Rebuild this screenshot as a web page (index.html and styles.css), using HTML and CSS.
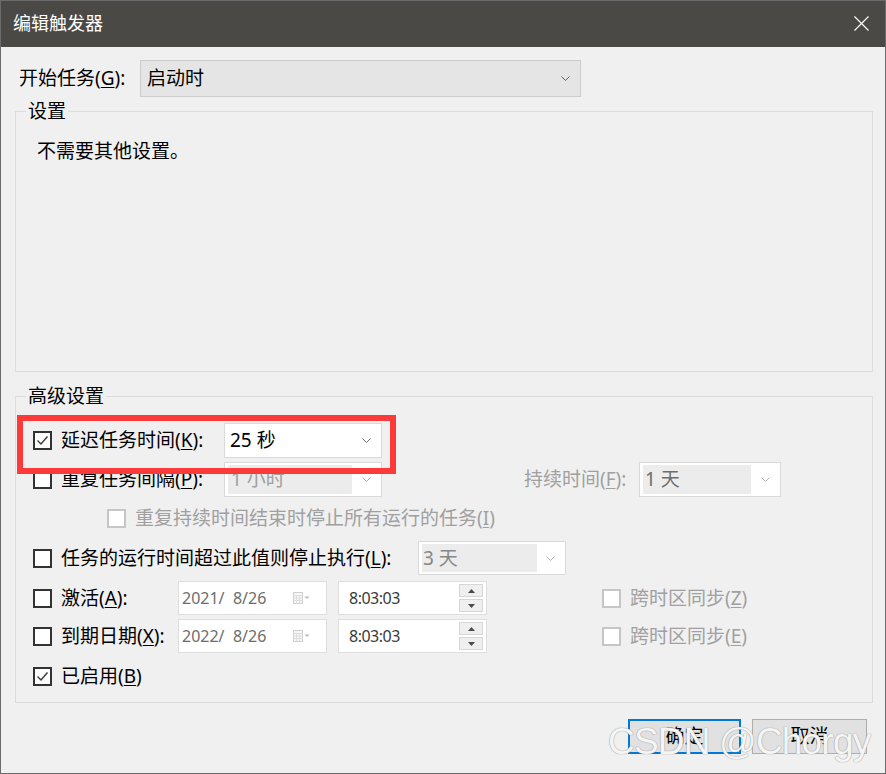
FILE: index.html
```html
<!DOCTYPE html>
<html lang="zh-CN">
<head>
<meta charset="utf-8">
<title>编辑触发器</title>
<link rel="stylesheet" href="styles.css">
</head>
<body>
<div class="win">
  <div class="titlebar">
    <span class="title">编辑触发器</span>
    <svg class="close" width="15" height="15" viewBox="0 0 15 15"><path d="M0.5 0.5L14.5 14.5M14.5 0.5L0.5 14.5" stroke="#ffffff" stroke-width="1.2" fill="none"/></svg>
  </div>
  <div class="content">
    <div class="row-start">
      <span class="start-label">开始任务(<u>G</u>):</span>
      <div class="combo combo-gray c-start">
        <span class="val">启动时</span>
        <svg class="chev" width="9" height="5" viewBox="0 0 9 5"><path d="M0.5 0.5L4.5 4.5L8.5 0.5" stroke="#5f5f5f" fill="none"/></svg>
      </div>
    </div>

    <div class="group group-settings">
      <span class="legend">设置</span>
      <p class="note">不需要其他设置。</p>
    </div>

    <div class="group group-adv">
      <span class="legend">高级设置</span>
      <div class="highlight"></div>

      <div class="arow r1">
        <span class="cb"><svg width="15" height="15" viewBox="0 0 15 15"><path d="M2.5 7.5L6 11L12.5 3.5" stroke="#3a3a3a" stroke-width="1.4" fill="none"/></svg></span>
        <span class="lbl w-delay">延迟任务时间(<u>K</u>):</span>
        <div class="combo c-delay">
          <span class="val">25 秒</span>
          <svg class="chev" width="9" height="5" viewBox="0 0 9 5"><path d="M0.5 0.5L4.5 4.5L8.5 0.5" stroke="#6a6a6a" fill="none"/></svg>
        </div>
      </div>

      <div class="arow r2">
        <span class="cb"></span>
        <span class="lbl w-delay">重复任务间隔(<u>P</u>):</span>
        <div class="combo dis c-delay">
          <span class="field f-rep">1 小时</span>
          <svg class="chev" width="9" height="5" viewBox="0 0 9 5"><path d="M0.5 0.5L4.5 4.5L8.5 0.5" stroke="#b4b4b4" fill="none"/></svg>
        </div>
        <span class="lbl dim dur-lbl">持续时间(<u>F</u>):</span>
        <div class="combo dis c-dur">
          <span class="field f-dur">1 天</span>
          <svg class="chev" width="9" height="5" viewBox="0 0 9 5"><path d="M0.5 0.5L4.5 4.5L8.5 0.5" stroke="#b4b4b4" fill="none"/></svg>
        </div>
      </div>

      <div class="arow r3">
        <span class="cb dis indent"></span>
        <span class="lbl dim">重复持续时间结束时停止所有运行的任务(<u>I</u>)</span>
      </div>

      <div class="arow r4">
        <span class="cb"></span>
        <span class="lbl w-stop">任务的运行时间超过此值则停止执行(<u>L</u>):</span>
        <div class="combo dis c-stop">
          <span class="field f-stop">3 天</span>
          <svg class="chev" width="9" height="5" viewBox="0 0 9 5"><path d="M0.5 0.5L4.5 4.5L8.5 0.5" stroke="#b4b4b4" fill="none"/></svg>
        </div>
      </div>

      <div class="arow r5">
        <span class="cb"></span>
        <span class="lbl w-date">激活(<u>A</u>):</span>
        <div class="datebox">
          <span class="dval">2021/  8/26</span>
          <svg class="cal" width="17" height="12" viewBox="0 0 17 12"><rect x="0.5" y="0.5" width="9" height="11" fill="#f6f6f6" stroke="#cfcfcf"/><path d="M0.5 3.5H9.5M0.5 6H9.5M0.5 8.5H9.5M3.5 3.5V11.5M6.5 3.5V11.5" stroke="#dedede"/><path d="M11.5 4.5H16.5L14 7Z" fill="#b8b8b8"/></svg>
        </div>
        <div class="timebox">
          <span class="tval">8:03:03</span>
          <span class="spin">
            <span class="sb"><svg width="7" height="4" viewBox="0 0 7 4"><path d="M0 4L3.5 0L7 4Z" fill="#4a4a4a"/></svg></span>
            <span class="sb"><svg width="7" height="4" viewBox="0 0 7 4"><path d="M0 0L3.5 4L7 0Z" fill="#4a4a4a"/></svg></span>
          </span>
        </div>
        <span class="cb dis sync"></span>
        <span class="lbl dim">跨时区同步(<u>Z</u>)</span>
      </div>

      <div class="arow r6">
        <span class="cb"></span>
        <span class="lbl w-date">到期日期(<u>X</u>):</span>
        <div class="datebox">
          <span class="dval">2022/  8/26</span>
          <svg class="cal" width="17" height="12" viewBox="0 0 17 12"><rect x="0.5" y="0.5" width="9" height="11" fill="#f6f6f6" stroke="#cfcfcf"/><path d="M0.5 3.5H9.5M0.5 6H9.5M0.5 8.5H9.5M3.5 3.5V11.5M6.5 3.5V11.5" stroke="#dedede"/><path d="M11.5 4.5H16.5L14 7Z" fill="#b8b8b8"/></svg>
        </div>
        <div class="timebox">
          <span class="tval">8:03:03</span>
          <span class="spin">
            <span class="sb"><svg width="7" height="4" viewBox="0 0 7 4"><path d="M0 4L3.5 0L7 4Z" fill="#4a4a4a"/></svg></span>
            <span class="sb"><svg width="7" height="4" viewBox="0 0 7 4"><path d="M0 0L3.5 4L7 0Z" fill="#4a4a4a"/></svg></span>
          </span>
        </div>
        <span class="cb dis sync"></span>
        <span class="lbl dim">跨时区同步(<u>E</u>)</span>
      </div>

      <div class="arow r7">
        <span class="cb"><svg width="15" height="15" viewBox="0 0 15 15"><path d="M2.5 7.5L6 11L12.5 3.5" stroke="#3a3a3a" stroke-width="1.4" fill="none"/></svg></span>
        <span class="lbl">已启用(<u>B</u>)</span>
      </div>
    </div>

    <div class="buttons">
      <button class="btn btn-default">确定</button>
      <button class="btn">取消</button>
    </div>
  </div>
  <div class="watermark">CSDN @Chorgy</div>
</div>
</body>
</html>
```

FILE: styles.css
```css
* { box-sizing: border-box; }
html, body { margin: 0; padding: 0; }
body {
  background: #f0f0f0;
  font-family: "Noto Sans", "Noto Sans CJK SC", sans-serif;
  font-size: 19px;
  color: #000;
}
u { text-decoration-thickness: 1px; text-underline-offset: 2px; }

.win {
  position: relative;
  width: 886px;
  height: 774px;
  border: 1px solid #6b6b6b;
  background: #f0f0f0;
  overflow: hidden;
}

.titlebar {
  height: 46px;
  background: #4b4946;
  display: flex;
  align-items: center;
  justify-content: space-between;
  padding: 0 16px 3px 12px;
}
.title { color: #fff; font-size: 18px; line-height: 24px; }
.close { display: block; margin-top: 2px; }

.content { padding: 13px 12px 0 14px; }

.row-start { display: flex; align-items: center; height: 37px; }
.start-label { width: 121px; margin-left: 4px; line-height: 27px; }

.combo {
  display: flex;
  align-items: center;
  justify-content: space-between;
  background: #fff;
  border: 1px solid #d9d9d9;
  padding: 0 10px 0 5px;
  line-height: 27px;
}
.combo-gray { background: #e5e5e5; border-color: #cccccc; padding-left: 6px; }
.chev { display: block; flex: none; }
.c-start { width: 441px; height: 37px; }
.c-delay { width: 158px; height: 35px; }
.c-dur { width: 142px; height: 35px; }
.c-stop { width: 148px; height: 34px; }

.combo.dis { padding: 2px 10px 2px 3px; }
.field {
  align-self: stretch;
  display: flex;
  align-items: center;
  background: #ececec;
  padding-left: 3px;
  color: #a0a0a0;
}
.f-rep { width: 124px; }
.f-dur { width: 108px; color: #6d6d6d; padding-left: 2px; }
.f-stop { width: 115px; color: #878787; padding-left: 1px; }

.group {
  position: relative;
  border: 1px solid #dcdcdc;
}
.legend {
  position: absolute;
  top: -14px;
  left: 10px;
  padding: 0 2px;
  line-height: 27px;
  background: #f0f0f0;
}
.group-settings {
  margin-top: 14px;
  height: 261px;
  padding: 26px 0 0 21px;
}
.note { margin: 0; line-height: 27px; }

.group-adv {
  margin-top: 24px;
  padding: 26px 0 9px 17px;
}
.highlight {
  position: absolute;
  left: 1px;
  top: 18px;
  width: 379px;
  height: 59px;
  border: 6px solid #fd3a3a;
  z-index: 2;
}

.arow { display: flex; align-items: center; line-height: 27px; }
.r1 { height: 35px; }
.r2 { height: 35px; margin-top: 4px; }
.r3 { height: 36px; margin-top: 3px; }
.r4 { height: 34px; margin-top: 5px; }
.r5 { height: 34px; margin-top: 6px; }
.r6 { height: 34px; margin-top: 4px; }
.r7 { height: 34px; margin-top: 6px; }

.cb {
  flex: none;
  width: 19px;
  height: 19px;
  border: 2px solid #333;
  background: #fff;
  display: flex;
  align-items: center;
  justify-content: center;
}
.cb svg { display: block; }
.cb.dis { border-color: #c6c6c6; }
.cb.indent { margin-left: 74px; }
.cb.sync { margin-left: 115px; }

.lbl { margin-left: 9px; white-space: nowrap; }
.dim { color: #a0a0a0; }
.w-delay { width: 163px; flex: none; }
.w-stop { width: 357px; flex: none; }
.w-date { width: 117px; flex: none; }
.dur-lbl { margin-left: 142px; width: 115px; flex: none; }

.datebox {
  width: 149px;
  height: 34px;
  background: #fff;
  border: 1px solid #dedede;
  display: flex;
  align-items: center;
  padding: 0 16px 0 3px;
  font-size: 16px;
  color: #6d6d6d;
}
.dval { white-space: pre; }
.cal { display: block; margin-left: auto; }

.timebox {
  width: 149px;
  height: 34px;
  margin-left: 11px;
  background: #fff;
  border: 1px solid #dedede;
  display: flex;
  align-items: center;
  padding: 0 3px 0 10px;
  font-size: 16px;
  color: #3a3a3a;
}
.tval { letter-spacing: -0.5px; }
.spin {
  margin-left: auto;
  display: flex;
  flex-direction: column;
  gap: 2px;
}
.sb {
  width: 24px;
  height: 13px;
  background: #efefef;
  border: 1px solid #d6d6d6;
  display: flex;
  align-items: center;
  justify-content: center;
}
.sb svg { display: block; }

.buttons {
  display: flex;
  justify-content: flex-end;
  gap: 11px;
  margin-top: 16px;
  padding-right: 6px;
}
.btn {
  height: 35px;
  width: 115px;
  font-family: "Noto Sans", "Noto Sans CJK SC", sans-serif;
  font-size: 19px;
  color: #000;
  background: #e1e1e1;
  border: 1px solid #adadad;
  padding: 0;
  line-height: 27px;
}
.btn-default { width: 113px; border: 2px solid #0078d7; }

.watermark {
  position: absolute;
  left: 607px;
  top: 722px;
  font-family: "Liberation Sans", Arial, sans-serif;
  font-size: 37px;
  line-height: 37px;
  letter-spacing: -0.8px;
  color: rgba(255, 255, 255, 0.92);
  text-shadow: 0 0 1px #9a9a9a, 0 0 1px #9a9a9a;
  white-space: nowrap;
  z-index: 3;
}
```
